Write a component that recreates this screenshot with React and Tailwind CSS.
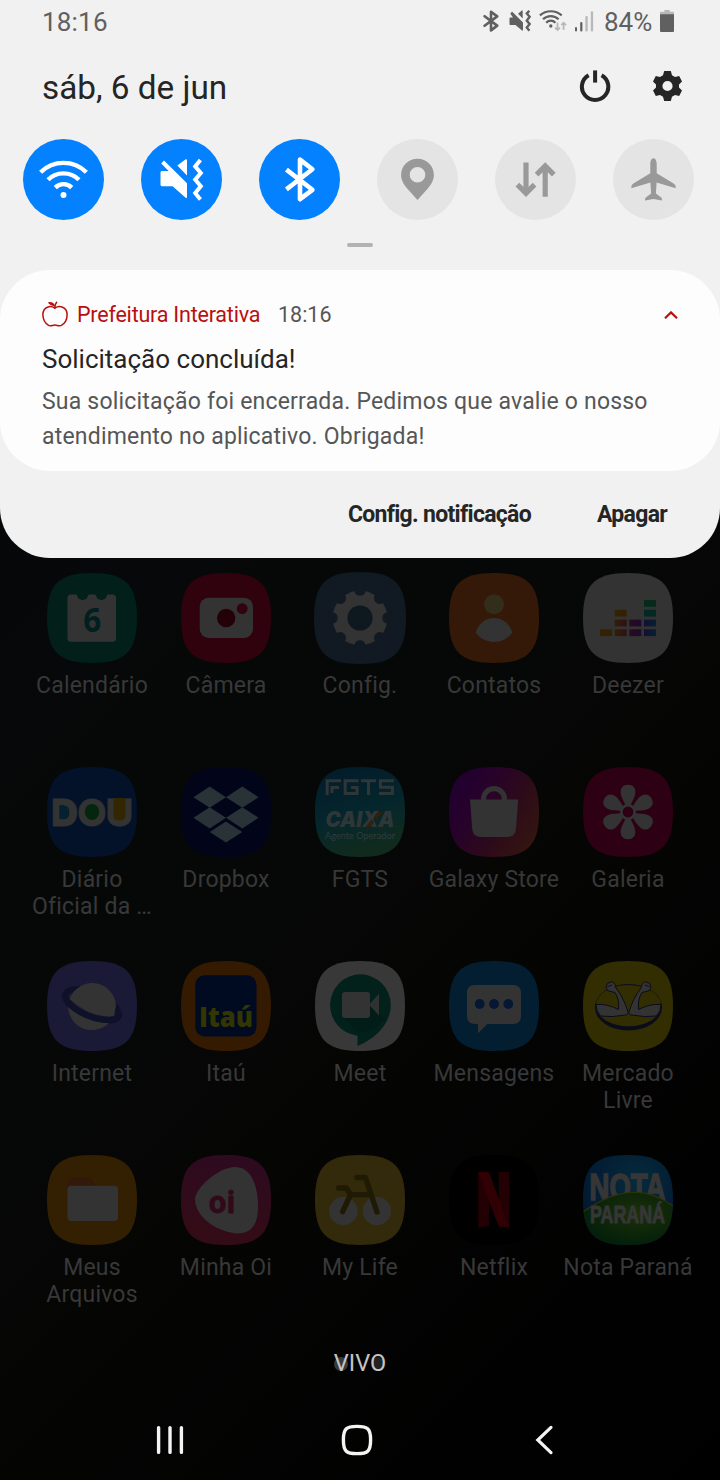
import React from "react";

const SQUIRCLE =
  "M45 0C78.5 0 90 11.5 90 45S78.5 90 45 90S0 78.5 0 45S11.5 0 45 0Z";

/* ---------- status bar ---------- */

function StatusIcons() {
  return (
    <div className="flex items-center">
      <div className="flex items-center pb-[2px]">
        <svg className="h-[22px] w-4" viewBox="0 0 16 22" fill="none" stroke="#606060" strokeWidth="2.6" strokeLinejoin="round" strokeLinecap="round">
          <path d="M1.6 6.2L14.2 15.6L8 20.4V1.8L14.2 6.4L1.6 15.8" />
        </svg>
        <svg className="ml-[10px] h-[22px] w-[22px]" viewBox="0 0 22 22">
          <path d="M0.5 8L1.2 7.4H4L1.3 3.8L3 1.5L14 12.4V20.6H13L6.5 15H1.2L0.5 14.4Z" fill="#606060" />
          <path d="M9 3.8L12.8 0.6H13.7V8.4Z" fill="#606060" />
          <path d="M20.4 0.8L17.8 3.4L20.6 6.8L17.8 10.6L20.6 14L17.8 17.6L20.4 20.8" fill="none" stroke="#606060" strokeWidth="2.4" />
        </svg>
        <svg className="ml-2 h-[22px] w-7" viewBox="0 0 28 22" fill="none" stroke="#606060" strokeWidth="2.2">
          <path d="M0.9 5.4A16.4 16.4 0 0 1 22.7 5.4" />
          <path d="M4 9.3A11 11 0 0 1 19.6 9.3" />
          <path d="M7.2 12.7A6.2 6.2 0 0 1 16.4 12.7" />
          <circle cx="11.8" cy="16" r="1.7" fill="#606060" stroke="none" />
          <path d="M18.5 12.5V20M16 17.6L18.5 20L21 17.6M24.6 20V13M22.2 15.2L24.6 12.8L27 15.2" stroke="#b8b8b8" strokeWidth="1.8" />
        </svg>
        <svg className="ml-[7px] h-[22px] w-5" viewBox="0 0 20 22">
          <rect x="1" y="17" width="2" height="4.4" rx="1" fill="#606060" />
          <rect x="6.2" y="12" width="2.2" height="9.4" rx="1" fill="#606060" />
          <rect x="11.4" y="6" width="2.3" height="15.4" rx="1" fill="#b8b8b8" />
          <rect x="16.8" y="1.2" width="2.3" height="20.2" rx="1" fill="#b8b8b8" />
        </svg>
      </div>
      <span className="ml-[10px] w-[50px] text-[26px] leading-[44px] text-[#606060]">84%</span>
      <svg className="mb-[2px] ml-[6px] h-[22px] w-[14px]" viewBox="0 0 14 22">
        <path d="M4.4 0H9.8V1.8H13.2Q14 1.8 14 2.6V5H0V2.6Q0 1.8 0.8 1.8H4.4Z" fill="#b8b8b8" />
        <path d="M0 4.2H14V21Q14 22 13 22H1Q0 22 0 21Z" fill="#606060" />
      </svg>
    </div>
  );
}

/* ---------- quick toggles ---------- */

const toggles = [
  {
    name: "wifi",
    on: true,
    art: (
      <g fill="none" stroke="#fff" strokeWidth="4.4">
        <path d="M17.6 33.2A32.7 32.7 0 0 1 63.4 33.2" />
        <path d="M25 40.8A22 22 0 0 1 56 40.8" />
        <path d="M32.3 48.6A11.4 11.4 0 0 1 48.7 48.6" />
        <circle cx="40.5" cy="56" r="3" fill="#fff" stroke="none" />
      </g>
    ),
  },
  {
    name: "vibrate",
    on: true,
    art: (
      <g fill="#fff">
        <path d="M19.5 33.4Q19.5 32 21 32H27.6L20.2 24.4L23 21.4L46 44.2V58Q46 59.6 44.6 58.8L31.6 47.2H21Q19.5 47.2 19.5 45.8Z" />
        <path d="M36.3 26.6L44.4 20.5Q46 19.8 46 21.4V36.6Z" />
        <path d="M59.4 21L54.2 27.4L59.8 34L54.2 40.6L59.8 47.2L54.2 54L59.4 60.4" fill="none" stroke="#fff" strokeWidth="4" />
      </g>
    ),
  },
  {
    name: "bluetooth",
    on: true,
    art: (
      <path d="M27.4 30.6L53.4 50.8L41 60.2V20.6L53.4 30.2L27.4 50.4" fill="none" stroke="#fff" strokeWidth="4.6" strokeLinejoin="round" />
    ),
  },
  {
    name: "location",
    on: false,
    art: (
      <path
        fillRule="evenodd"
        fill="#999"
        d="M40.5 19.8C49.6 19.8 56.9 27 56.9 36C56.9 41.4 54 45.6 50.8 49.4L40.5 61L30.2 49.4C27 45.6 24.1 41.4 24.1 36C24.1 27 31.4 19.8 40.5 19.8ZM40.5 28A7.8 7.8 0 1 0 40.5 43.6A7.8 7.8 0 1 0 40.5 28Z"
      />
    ),
  },
  {
    name: "data",
    on: false,
    art: (
      <g fill="none" stroke="#999" strokeWidth="5.2">
        <path d="M31 23.4V54M22.4 45.6L31 54.2L39.6 45.6" />
        <path d="M50.2 57.8V27M41.6 35.6L50.2 27L58.8 35.6" />
      </g>
    ),
  },
  {
    name: "airplane",
    on: false,
    art: (
      <path
        fill="#999"
        d="M40.5 19.2C42.6 19.2 43.7 22 43.7 25V34.2L60.6 44.6Q62.7 46 62.7 48V49.2L43.6 43.6L42.9 54.4L48.2 58.6Q49.2 59.6 49 61.4L40.5 60L32 61.4Q31.8 59.6 32.8 58.6L38.1 54.4L37.4 43.6L18.3 49.2V48Q18.3 46 20.4 44.6L37.3 34.2V25C37.3 22 38.4 19.2 40.5 19.2Z"
      />
    ),
  },
];

function QuickToggle({ on, art }) {
  return (
    <div className={`size-[81px] rounded-full ${on ? "bg-[#0381fe]" : "bg-[#e4e4e4]"}`}>
      <svg className="size-[81px]" viewBox="0 0 81 81">{art}</svg>
    </div>
  );
}

/* ---------- home screen apps ---------- */

const notchAngles = [0, 45, 90, 135, 180, 225, 270, 315];
const petalAngles = [0, 60, 120, 180, 240, 300];

const apps = [
  {
    label: "Calendário",
    bg: "#021f1a",
    art: (
      <>
        <rect x="20.5" y="21.5" width="48.5" height="47.2" rx="3.5" fill="#333" />
        <circle cx="35.6" cy="21.2" r="5.8" fill="#021f1a" />
        <circle cx="54.4" cy="21.2" r="5.8" fill="#021f1a" />
        <text x="36.2" y="59" fontSize="34" fontWeight="700" fontFamily="'Open Sans', sans-serif" fill="#021f1f" textLength="18" lengthAdjust="spacingAndGlyphs">6</text>
      </>
    ),
  },
  {
    label: "Câmera",
    bg: "#2f020e",
    art: (
      <>
        <rect x="18.7" y="24.7" width="53.3" height="40.3" rx="9" fill="#333" />
        <circle cx="45.2" cy="45" r="9.2" fill="#240008" />
        <circle cx="61.2" cy="35.6" r="5.4" fill="#330210" />
      </>
    ),
  },
  {
    label: "Config.",
    bg: "#111a22",
    art: (
      <>
        <circle cx="45" cy="45" r="26.8" fill="#333" />
        {notchAngles.map((a) => (
          <ellipse key={a} cx="71.6" cy="45" rx="4.8" ry="5.4" fill="#111a22" transform={`rotate(${a} 45 45)`} />
        ))}
        <circle cx="45" cy="45" r="12.3" fill="#0d181f" />
      </>
    ),
  },
  {
    label: "Contatos",
    bg: "#351908",
    art: (
      <>
        <circle cx="45" cy="31.2" r="10" fill="#332d1b" />
        <path d="M26.7 59.6C29.5 50.5 36.5 45 45 45S60.5 50.5 63.4 59.6C58.5 66 52.5 69 45 69S31.5 66 26.7 59.6Z" fill="#333" />
      </>
    ),
  },
  {
    label: "Deezer",
    bg: "#333",
    art: (
      <>
        <defs>
          <linearGradient id="dz1"><stop stopColor="#332303" /><stop offset="1" stopColor="#332005" /></linearGradient>
          <linearGradient id="dz2"><stop stopColor="#332005" /><stop offset="1" stopColor="#300f15" /></linearGradient>
          <linearGradient id="dz3"><stop stopColor="#2a0a20" /><stop offset="1" stopColor="#1b0b2b" /></linearGradient>
          <linearGradient id="dz4"><stop stopColor="#121033" /><stop offset="1" stopColor="#081f33" /></linearGradient>
        </defs>
        <rect x="17" y="56.3" width="12" height="6.8" fill="url(#dz1)" />
        <rect x="31.7" y="56.3" width="12" height="6.8" fill="url(#dz2)" />
        <rect x="31.7" y="46.6" width="12" height="6.8" fill="url(#dz2)" />
        <rect x="31.7" y="36.8" width="12" height="6.8" fill="url(#dz1)" />
        <rect x="46.3" y="56.3" width="12" height="6.8" fill="url(#dz3)" />
        <rect x="46.3" y="46.6" width="12" height="6.8" fill="url(#dz3)" />
        <rect x="61" y="56.3" width="12" height="6.8" fill="url(#dz4)" />
        <rect x="61" y="46.6" width="12" height="6.8" fill="url(#dz4)" />
        <rect x="61" y="36.8" width="12" height="6.8" fill="#032a22" />
        <rect x="61" y="27" width="12" height="6.8" fill="#062b1c" />
      </>
    ),
  },
  {
    label: "Diário Oficial da …",
    bg: "#031229",
    art: (
      <>
        <text x="4.5" y="58.6" fontSize="37.5" fontWeight="900" fontFamily="Inter, sans-serif" fill="#333" stroke="#333" strokeWidth="1" textLength="81" lengthAdjust="spacingAndGlyphs">DOU</text>
        <path d="M12.4 38H15.5Q22 38.5 22 45T15.5 52H12.4Z" fill="#03212e" />
        <ellipse cx="45" cy="45" rx="7.2" ry="8" fill="#04260f" />
        <path d="M66.4 31H78.4V49Q78 53.5 72.4 53.5T66.4 49Z" fill="#332602" />
      </>
    ),
  },
  {
    label: "Dropbox",
    bg: "#02051a",
    art: (
      <g fill="#293236">
        <path d="M28.7 19.6L45 30.2L28.7 40.8L12.4 30.2Z" />
        <path d="M61.3 19.6L77.6 30.2L61.3 40.8L45 30.2Z" />
        <path d="M28.7 40.2L45 50.8L28.7 61.4L12.4 50.8Z" />
        <path d="M61.3 40.2L77.6 50.8L61.3 61.4L45 50.8Z" />
        <path d="M45 54.6L61.3 65L45 75.4L28.7 65Z" />
      </g>
    ),
  },
  {
    label: "FGTS",
    bg: "url(#fgtsBg)",
    art: (
      <>
        <defs>
          <linearGradient id="fgtsBg" x1="0" y1="0" x2="0.3" y2="1">
            <stop stopColor="#021b2a" />
            <stop offset="0.6" stopColor="#05262c" />
            <stop offset="1" stopColor="#102b1e" />
          </linearGradient>
        </defs>
        <g fill="none" stroke="#2f3638" strokeWidth="3">
          <path d="M12.2 28V13.7H26M17 26V20.6H24" />
          <path d="M43.5 13.7H30.2V26.5H42V20.4H36" />
          <path d="M46 13.7H61M53.5 13.7V28" />
          <path d="M78.8 13.7H65.4V20.2H77.4V26.5H64" />
        </g>
        <text x="10.5" y="60" fontSize="21" fontWeight="900" fontStyle="italic" fontFamily="Inter, sans-serif" fill="#2f3638" textLength="69" lengthAdjust="spacingAndGlyphs">CAIXA</text>
        <path d="M50.5 60H55.5L59 55L56.5 52.5ZM59 50L62.5 45H67.8L61.5 53Z" fill="#33200c" />
        <text x="10" y="72" fontSize="9.5" fontFamily="Lato, sans-serif" fill="#303c3d" textLength="70" lengthAdjust="spacingAndGlyphs">Agente Operador</text>
      </>
    ),
  },
  {
    label: "Galaxy Store",
    bg: "url(#storeBg)",
    art: (
      <>
        <defs>
          <linearGradient id="storeBg" x1="0" y1="0.25" x2="1" y2="0.85">
            <stop stopColor="#210030" />
            <stop offset="0.3" stopColor="#27022a" />
            <stop offset="0.6" stopColor="#2d0a1a" />
            <stop offset="1" stopColor="#34170f" />
          </linearGradient>
        </defs>
        <path d="M34.6 34V31.6A10.4 10 0 0 1 55.4 31.6V34" fill="none" stroke="#333" strokeWidth="5.2" />
        <path d="M21 32.6H69.2L67 62Q66.2 70 58 70H32.2Q24 70 23.2 62Z" fill="#333" />
      </>
    ),
  },
  {
    label: "Galeria",
    bg: "#2e0013",
    art: (
      <>
        {petalAngles.map((a) => (
          <path key={a} d="M43.6 42C42 35 37.6 30.5 37.6 25Q37.8 17.8 45 17.8T52.4 25C52.4 30.5 48 35 46.4 42Z" fill="#333" transform={`rotate(${a} 45 45)`} />
        ))}
        <circle cx="45" cy="45" r="8" fill="#333" />
        <circle cx="45" cy="45" r="5.4" fill="#2e0013" />
      </>
    ),
  },
  {
    label: "Internet",
    bg: "#1a1936",
    art: (
      <>
        <ellipse cx="45" cy="44" rx="28.5" ry="12" fill="none" stroke="#0f1128" strokeWidth="6" transform="rotate(23 45 44)" />
        <path d="M22.5 38A24 24 0 0 1 69 44L67 55Q45 58 22.5 38Z" fill="#333" />
        <path d="M21 46A24 24 0 0 0 62 62Q38 60 21 46Z" fill="#333" />
        <path d="M17.6 33C17.5 41 30 52 46 56.5C60 60.5 71 60 72.4 53.5" fill="none" stroke="#0f1128" strokeWidth="6" />
      </>
    ),
  },
  {
    label: "Itaú",
    bg: "#331a00",
    art: (
      <>
        <rect x="14.3" y="14.3" width="61.2" height="61.2" rx="9.5" fill="#000a20" />
        <text x="18" y="65.6" fontSize="28" fontWeight="800" fontFamily="'Open Sans', sans-serif" fill="#333502" textLength="54" lengthAdjust="spacingAndGlyphs">Itaú</text>
      </>
    ),
  },
  {
    label: "Meet",
    bg: "#383838",
    art: (
      <>
        <path d="M45 13.3A30.8 30.8 0 0 1 75.8 44C75.8 60 64 76 42.5 85V74.7A30.8 30.8 0 0 1 45 13.3Z" fill="#03211b" />
        <path d="M29 57L44 72L60 68L70 58L54 44Z" fill="#021c17" />
        <rect x="27" y="31" width="28" height="26" rx="3" fill="#333" />
        <path d="M54 43.7L64 32.8V54.6Z" fill="#303232" />
      </>
    ),
  },
  {
    label: "Mensagens",
    bg: "#021e30",
    art: (
      <>
        <path d="M26 24H64Q72 24 72 32V55Q72 63 64 63H38.4L29 72.2V63H26Q18 63 18 55V32Q18 24 26 24Z" fill="#333" />
        <circle cx="30.7" cy="43" r="4.9" fill="#051733" />
        <circle cx="45" cy="43" r="4.9" fill="#051733" />
        <circle cx="59.3" cy="43" r="4.9" fill="#051733" />
      </>
    ),
  },
  {
    label: "Mercado Livre",
    bg: "#332e01",
    art: (
      <>
        <ellipse cx="45.5" cy="46.3" rx="33.6" ry="23.2" fill="#0a0c1c" />
        <ellipse cx="45.5" cy="44.6" rx="32.6" ry="20.6" fill="#332e01" />
        <g fill="#333" stroke="#0a0c1c" strokeWidth="1" strokeLinejoin="round">
          <path d="M13 43.5Q24 42.5 35.5 48.5Q36.5 38 32 31.5L24.5 29.6Q21.6 25.6 24.4 22.4L29.4 20.6Q32.6 22.6 33 27Q41.5 38 45.3 52Q44.4 54.6 41 54.2Q29 56.6 17.5 55Q13 50 13 43.5Z" />
          <path d="M78 43.5Q67 42.5 55.5 48.5Q54.5 38 59 31.5L66.5 29.6Q69.4 25.6 66.6 22.4L61.6 20.6Q58.4 22.6 58 27Q49.5 38 45.7 52Q46.6 54.6 50 54.2Q62 56.6 73.5 55Q78 50 78 43.5Z" />
          <path d="M24.5 25.6L29 24M66.5 25.6L62 24" />
        </g>
      </>
    ),
  },
  {
    label: "Meus Arquivos",
    bg: "#332002",
    art: (
      <>
        <path d="M20.5 26Q20.5 22.5 24 22.5H42Q44.5 22.5 45.6 25L48 33H20.5Z" fill="#33190a" />
        <rect x="20.5" y="30.8" width="50.5" height="35.2" rx="4" fill="#333" />
      </>
    ),
  },
  {
    label: "Minha Oi",
    bg: "url(#oiBg)",
    art: (
      <>
        <defs>
          <linearGradient id="oiBg" x1="0.6" y1="0" x2="0.4" y2="1">
            <stop stopColor="#2e0a20" />
            <stop offset="1" stopColor="#330c15" />
          </linearGradient>
        </defs>
        <path d="M54 12C70 12 77 30 77 52C77 70 70 78.5 56 78.5C36 77 14 62 14 44C15 32 38 12 54 12Z" fill="#333" />
        <text x="27.5" y="58" fontSize="31" fontWeight="700" fontFamily="'Open Sans', sans-serif" fill="#300a18" stroke="#300a18" strokeWidth="0.8" textLength="27" lengthAdjust="spacingAndGlyphs">oi</text>
      </>
    ),
  },
  {
    label: "My Life",
    bg: "#332a0c",
    art: (
      <>
        <circle cx="28.4" cy="56" r="14.2" fill="#333" />
        <circle cx="61.8" cy="56" r="14.2" fill="#333" />
        <path d="M23.6 33H31.4L35.6 39.6H54M35.6 39.6L27.6 56.6M42 22.5H50.4L62 57" fill="none" stroke="#1f1a04" strokeWidth="5.4" strokeLinecap="round" strokeLinejoin="round" />
      </>
    ),
  },
  {
    label: "Netflix",
    bg: "#000",
    art: (
      <>
        <path d="M29.2 17H40V71.2L29.2 72.4ZM49.6 17H60.2V72.4L49.6 71.2Z" fill="#220003" />
        <path d="M29.2 17H40L60.2 72.4L49.6 71.2Z" fill="#310005" />
      </>
    ),
  },
  {
    label: "Nota Paraná",
    bg: "url(#notaSky)",
    art: (
      <>
        <defs>
          <radialGradient id="notaSky" cx="0.6" cy="0.3" r="0.7">
            <stop stopColor="#062a3c" />
            <stop offset="1" stopColor="#021730" />
          </radialGradient>
          <radialGradient id="notaHill" cx="0.6" cy="0.4" r="0.6">
            <stop stopColor="#1c3008" />
            <stop offset="1" stopColor="#04200b" />
          </radialGradient>
          <clipPath id="notaClip"><path d={SQUIRCLE} /></clipPath>
        </defs>
        <text x="6.5" y="44.5" fontSize="37" fontWeight="700" fontFamily="'Liberation Sans', sans-serif" fill="#363636" stroke="#363636" strokeWidth="1.6" textLength="76" lengthAdjust="spacingAndGlyphs">NOTA</text>
        <g clipPath="url(#notaClip)">
          <path d="M0 57Q50 21 90 51V90H0Z" fill="url(#notaHill)" />
          <path d="M0 57Q50 21 90 51" fill="none" stroke="#2e3306" strokeWidth="1.4" />
        </g>
        <text x="7" y="68" fontSize="24" fontWeight="700" fontFamily="'Liberation Sans', sans-serif" fill="#363636" stroke="#363636" strokeWidth="0.9" textLength="75" lengthAdjust="spacingAndGlyphs">PARANÁ</text>
      </>
    ),
  },
];

function AppTile({ label, bg, art }) {
  return (
    <div className="flex h-[194px] flex-col items-center">
      <svg className={label === "Config." ? "-my-px size-[92px]" : "size-[90px]"} viewBox="0 0 90 90">
        <path d={SQUIRCLE} fill={bg} />
        {art}
      </svg>
      <span className="mt-[9px] w-[132px] text-center text-[23px] leading-[27px] tracking-[0.2px] text-[#383838]">{label}</span>
    </div>
  );
}

export default function App() {
  return (
    <div className="flex h-[1480px] w-[720px] flex-col overflow-hidden bg-black bg-[linear-gradient(135deg,#04060a_0%,#060809_35%,#060807_50%,#050504_65%,#010101_88%,#000_100%)] font-['Roboto',sans-serif]">
      <section className="h-[558px] shrink-0 rounded-b-[50px] bg-[#f1f1f1]">
        <div className="flex h-11 items-center justify-between pl-[42px] pr-[46px] text-[#606060]">
          <span className="text-[26px] leading-[44px] tracking-[0.2px]">18:16</span>
          <StatusIcons />
        </div>

        <div className="flex h-[95px] items-center justify-between pb-[9px] pl-[42px] pr-[38px]">
          <h1 className="pt-[2px] text-[33.3px] leading-10 text-[#252525]">sáb, 6 de jun</h1>
          <div className="flex items-center gap-[42px] pb-[3px]">
            <svg className="size-8" viewBox="0 0 32 32" fill="none" stroke="#252525" strokeWidth="4">
              <path d="M9.6 5.3A13.2 13.2 0 1 0 22.6 5.3" />
              <path d="M16.1 0.4V12.6" />
            </svg>
            <svg className="h-[30px] w-[29px]" viewBox="0 0 29 30">
              <path
                fill="#252525"
                fillRule="evenodd"
                d="M11.2 0H17.8L19 4.2L22 6L26.2 5L29 10.4L26 13.4V16.6L29 19.6L26.2 25L22 24L19 25.8L17.8 30H11.2L10 25.8L7 24L2.8 25L0 19.6L3 16.6V13.4L0 10.4L2.8 5L7 6L10 4.2ZM14.5 9.9A5.1 5.1 0 1 0 14.5 20.1A5.1 5.1 0 1 0 14.5 9.9Z"
              />
            </svg>
          </div>
        </div>

        <div className="flex justify-between pl-[23px] pr-[26px]">
          {toggles.map((t) => (
            <QuickToggle key={t.name} on={t.on} art={t.art} />
          ))}
        </div>

        <div className="mx-auto mt-[23px] h-1 w-[26px] rounded-full bg-[#b2b2b2]" />

        <article className="mt-[23px] h-[201px] rounded-[50px] bg-[#fdfdfd] px-[42px] pt-[30px]">
          <header className="flex h-[30px] items-center">
            <svg className="mb-[3px] h-[26px] w-[26px]" viewBox="0 0 26 26" fill="none" stroke="#b80f0f" strokeWidth="1.5" strokeLinecap="round" strokeLinejoin="round">
              <path d="M12.8 7.2C10.5 5.6 8.2 5.2 6 6C2.4 7.3 0.8 10.6 0.9 14C1 18.6 3.4 22.4 6.6 24.4C8.8 25.6 10.6 24 12.9 24S17 25.6 19.4 24.4C22.8 22.4 25 18.6 25.1 14C25.2 10.6 23.6 7.3 20 6C17.6 5.2 15.2 5.6 12.8 7.2Z" />
              <path d="M12.9 7C12.8 4.6 13.4 2.6 14.6 1.2" />
              <path d="M12 4.6C10.4 4.4 8.4 3.4 7 1.8C9.2 1.6 11.2 2.6 12 4.6Z" fill="#b80f0f" />
            </svg>
            <span className="ml-[9px] w-[183px] whitespace-nowrap text-[21.5px] leading-[30px] tracking-[-0.21px] text-[#b80f0f]">Prefeitura Interativa</span>
            <span className="ml-[18px] text-[21.5px] leading-[30px] text-[#565656]">18:16</span>
            <svg className="ml-auto h-2 w-[14px]" viewBox="0 0 14 8" fill="none" stroke="#b80f0f" strokeWidth="2.2">
              <path d="M1 7.2L7 1.4L13 7.2" />
            </svg>
          </header>
          <h2 className="mt-[11px] text-[26px] leading-9 text-[#252525]">Solicitação concluída!</h2>
          <p className="mt-[7px] whitespace-nowrap text-[23px] leading-[35px] tracking-[0.2px] text-[#565656]">
            Sua solicitação foi encerrada. Pedimos que avalie o nosso
            <br />
            atendimento no aplicativo. Obrigada!
          </p>
        </article>

        <div className="flex h-[86px] items-center justify-end gap-[66px] pr-[53px] pt-[2px] text-[23px] font-bold tracking-[-0.7px] text-[#252525]">
          <span>Config. notificação</span>
          <span>Apagar</span>
        </div>
      </section>

      <main className="mt-[15px] grid shrink-0 grid-cols-[repeat(5,134px)] pl-[25px]">
        {apps.map((a) => (
          <AppTile key={a.label} label={a.label} bg={a.bg} art={a.art} />
        ))}
      </main>

      <div className="flex h-[28px] shrink-0 items-center justify-center">
        <div className="relative">
          <span className="absolute left-0 top-[8px] size-[14px] rounded-full bg-[#3a3a3a]" />
          <span className="absolute right-[2px] top-[8px] size-[12px] rounded-full bg-[#222]" />
          <span className="relative text-[23.5px] leading-7 text-[#c4c4c4]">VIVO</span>
        </div>
      </div>

      <nav className="flex flex-1 items-center pl-[156px] pt-[23px]">
        <svg className="h-8 w-7" viewBox="0 0 28 32" stroke="#f4f4f4" strokeWidth="3.4" strokeLinecap="round">
          <path d="M2.6 3.6V28.4M14 3.6V28.4M25.4 3.6V28.4" />
        </svg>
        <svg className="ml-[157px] size-8" viewBox="0 0 32 32" fill="none" stroke="#f4f4f4" strokeWidth="3.4">
          <path d="M16 2.4C27 2.4 29.6 5 29.6 16S27 29.6 16 29.6S2.4 27 2.4 16S5 2.4 16 2.4Z" />
        </svg>
        <svg className="ml-[161px] h-8 w-5" viewBox="0 0 20 32" fill="none" stroke="#f4f4f4" strokeWidth="3.2" strokeLinecap="round">
          <path d="M17 3.4L3.8 16L17 28.6" />
        </svg>
      </nav>
    </div>
  );
}
